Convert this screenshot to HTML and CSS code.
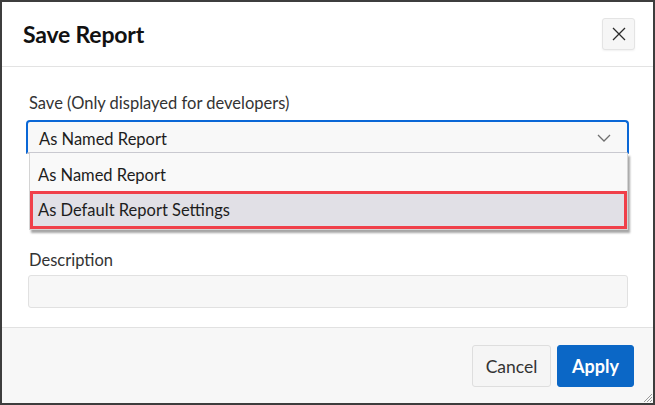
FILE: index.html
```html
<!DOCTYPE html>
<html>
<head>
<meta charset="utf-8">
<link rel="stylesheet" href="styles.css">
</head>
<body>
<div class="dialog">
  <header class="dlg-head">
    <h1 class="dlg-title">Save Report</h1>
    <button class="close-btn" aria-label="Close">
      <svg width="14" height="14" viewBox="0 0 14 14"><path d="M1 1 L13 13 M13 1 L1 13" stroke="#2b2b2b" stroke-width="1.3" fill="none"/></svg>
    </button>
  </header>
  <main class="dlg-body">
    <div class="field">
      <label class="field-label">Save (Only displayed for developers)</label>
      <div class="select-wrap">
        <div class="select">
          <span class="select-text">As Named Report</span>
          <svg class="chev" width="14" height="8" viewBox="0 0 14 8"><path d="M1 1 L7 7 L13 1" stroke="#6f6f6f" stroke-width="1.3" fill="none"/></svg>
        </div>
        <ul class="listbox">
          <li class="opt opt-first">As Named Report</li>
          <li class="opt opt-active">As Default Report Settings</li>
        </ul>
      </div>
    </div>
    <div class="field field-desc">
      <label class="field-label">Description</label>
      <div class="input"></div>
    </div>
  </main>
  <footer class="dlg-foot">
    <button class="btn btn-cancel">Cancel</button>
    <button class="btn btn-apply">Apply</button>
    <svg class="grip" width="10" height="10" viewBox="0 0 10 10"><path d="M9 1 L1 9 M9 4 L4 9 M9 7 L7 9" stroke="#9a9a9a" stroke-width="1" fill="none"/></svg>
  </footer>
</div>
</body>
</html>
```
FILE: styles.css
```css
* { box-sizing: border-box; }
html, body { margin: 0; padding: 0; }
body {
  width: 655px;
  height: 405px;
  font-family: "Segoe UI", Lato, "Noto Sans", sans-serif;
  color: #262626;
  background: #fff;
}
.dialog {
  width: 655px;
  height: 405px;
  border: 2px solid #3d3d3d;
  display: flex;
  flex-direction: column;
  background: #fff;
  position: relative;
}
.dlg-head {
  height: 65px;
  border-bottom: 1px solid #e3e3e3;
  display: flex;
  align-items: center;
  justify-content: space-between;
  padding: 0 18px 0 21px;
  flex: none;
}
.dlg-title {
  margin: 0;
  font-size: 23px;
  font-weight: 700;
  color: #111;
  letter-spacing: -0.2px;
}
.close-btn {
  width: 33px;
  height: 32px;
  margin-top: -1px;
  border: 1px solid #e4e4e4;
  border-radius: 3px;
  background: #f6f6f6;
  box-shadow: 0 1px 2px rgba(0,0,0,0.06);
  display: flex;
  align-items: center;
  justify-content: center;
  padding: 0;
}
.dlg-body {
  flex: 1;
  padding: 25px 24px 0 24px;
  display: flex;
  flex-direction: column;
}
.field { display: flex; flex-direction: column; }
.field-label {
  font-size: 16.5px;
  color: #333;
  line-height: 22px;
  padding-left: 3px;
}
.select-wrap {
  position: relative;
  margin-top: 6px;
}
.select {
  height: 34px;
  border: 2px solid #0a67d6;
  border-bottom-color: #c9c9d0;
  border-radius: 4px 4px 0 0;
  background: #f8f8f8;
  display: flex;
  align-items: center;
  justify-content: space-between;
  padding: 0 16px 0 11px;
  font-size: 16.5px;
  color: #1d1d1d;
}
.select-text { padding-top: 4px; }
.chev { margin-top: 2px; }
.listbox {
  position: absolute;
  left: 3px;
  right: 1px;
  top: 33px;
  margin: 0;
  padding: 0;
  list-style: none;
  background: #f9f9f9;
  border: 1px solid #d4d4d4;
  border-top: none;
  box-shadow: 2px 3px 2px rgba(0,0,0,0.35);
  z-index: 2;
}
.opt {
  height: 38px;
  display: flex;
  align-items: center;
  padding-left: 8px;
  font-size: 16.5px;
  color: #1d1d1d;
}
.opt-first { padding-top: 6px; }
.opt-active {
  background: #e1e0e6;
  border: 3px solid #f0404a;
  padding-left: 5px;
}
.field-desc { margin-top: 95px; }
.input {
  margin-top: 4px;
  height: 33px;
  border: 1px solid #e1e1e1;
  border-radius: 3px;
  background: #f7f7f7;
  margin-right: 1px;
  margin-left: 2px;
}
.dlg-foot {
  flex: none;
  height: 76px;
  border-top: 1px solid #e1e1e1;
  background: #f7f7f7;
  display: flex;
  justify-content: flex-end;
  align-items: flex-start;
  gap: 6px;
  padding: 17px 19px 0 0;
  position: relative;
}
.btn {
  height: 42px;
  border-radius: 3px;
  font-family: inherit;
  font-size: 17.5px;
  padding: 0;
}
.btn-cancel {
  width: 79px;
  background: #f5f5f5;
  border: 1px solid #dedede;
  color: #333;
}
.btn-apply {
  width: 77px;
  background: #0b67c6;
  border: 1px solid #0b67c6;
  color: #fff;
  font-weight: 700;
  font-size: 18px;
}
.grip {
  position: absolute;
  right: 0;
  bottom: 0;
}
```
